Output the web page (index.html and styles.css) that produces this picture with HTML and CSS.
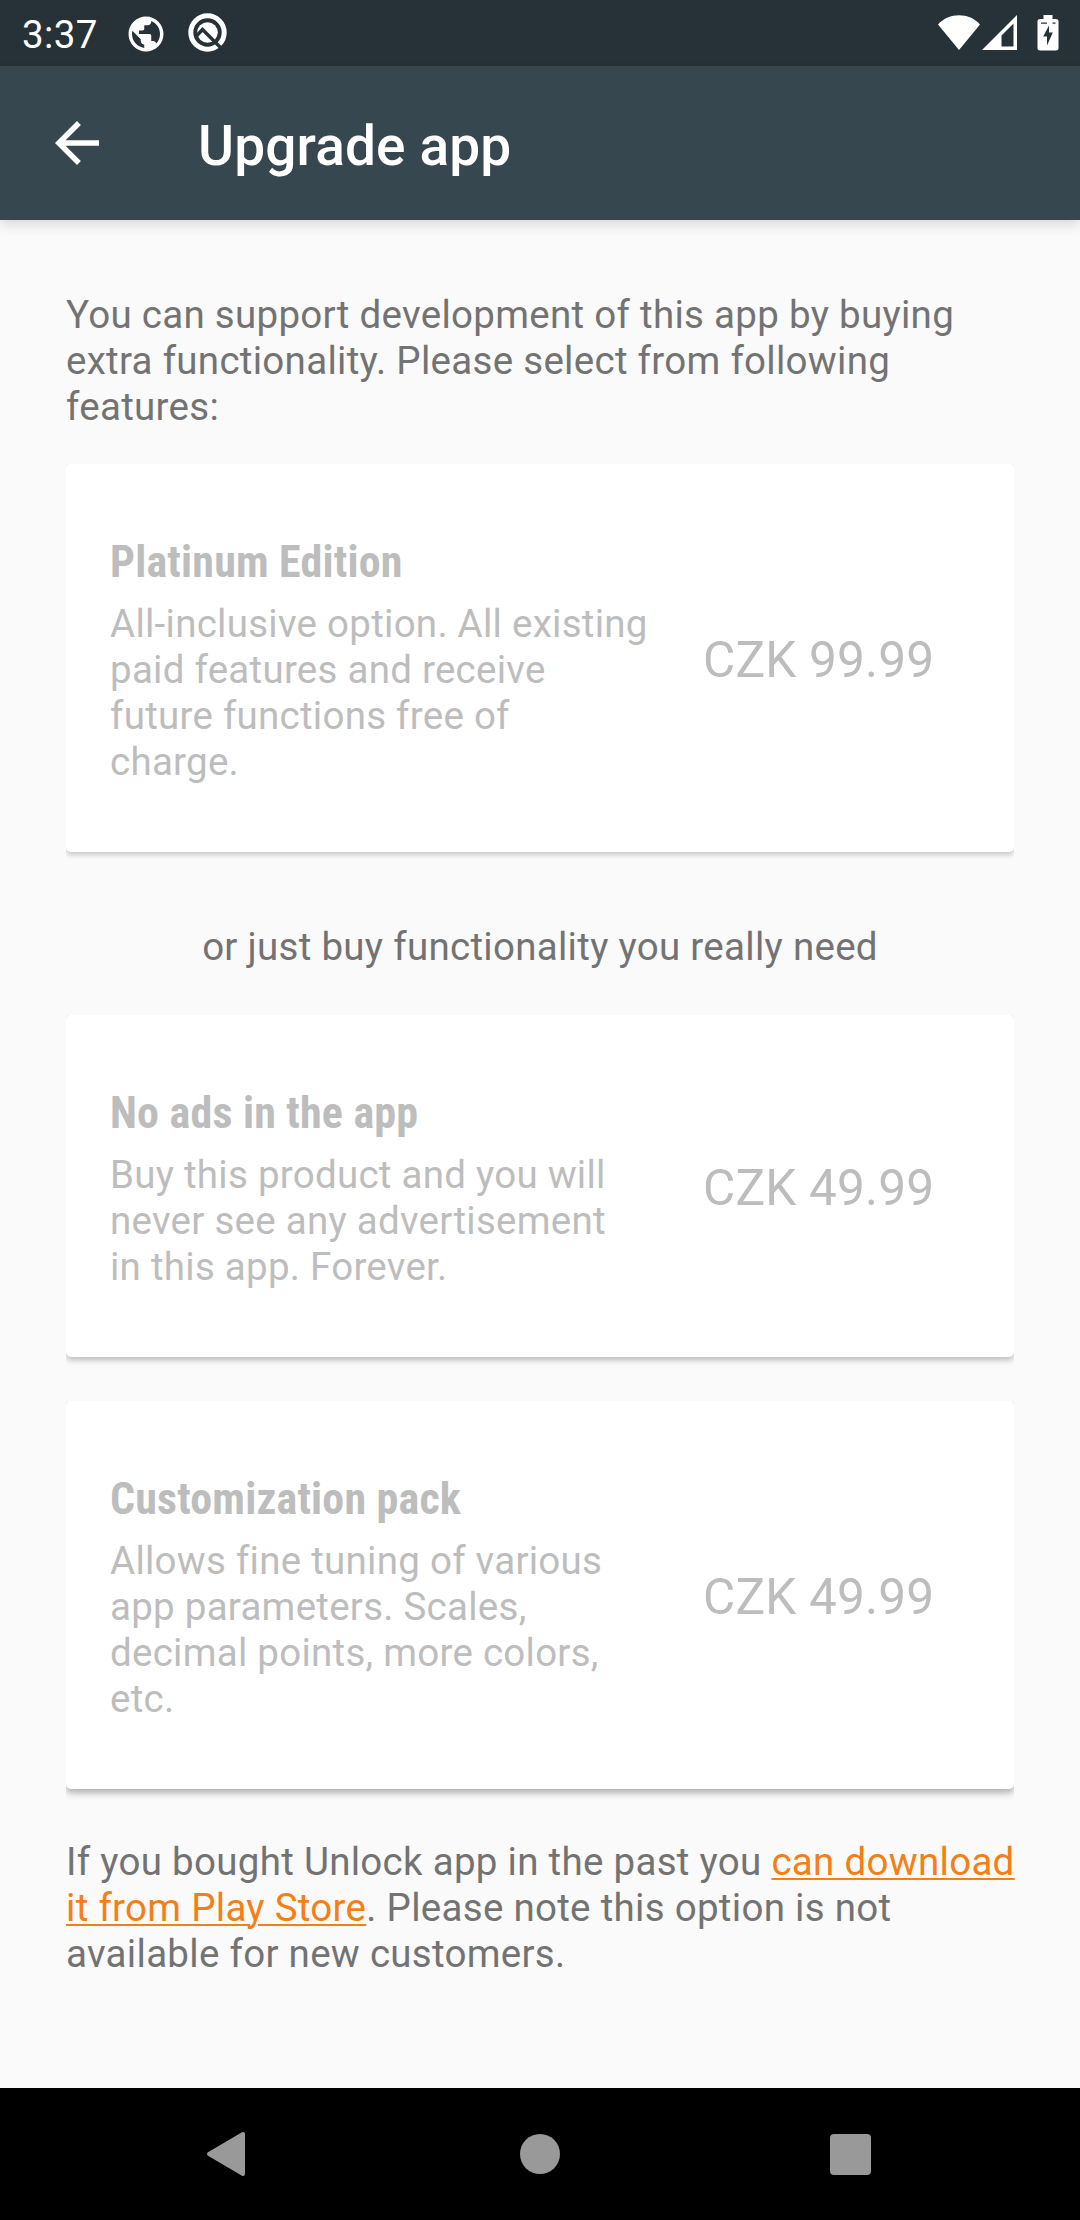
FILE: index.html
```
<!DOCTYPE html>
<html lang="en">
<head>
	<meta charset="UTF-8">
	<title>Upgrade app</title>
	<link rel="stylesheet" href="styles.css">
</head>
<body>
	<div class="status">
		<span class="time">3:37</span>
		<svg class="globe" width="42" height="42" viewBox="0 0 24 24"><path fill="#fff" d="M12 2C6.48 2 2 6.48 2 12s4.48 10 10 10 10-4.480 10-10S17.520 2 12 2zm-1 17.930c-3.950-.49-7-3.850-7-7.930 0-.62.08-1.210.21-1.790L9 15v1c0 1.100.9 2 2 2v1.930zm6.900-2.540c-.26-.81-1-1.390-1.900-1.390h-1v-3c0-.55-.45-1-1-1H8v-2h2c.55 0 1-.45 1-1V7h2c1.100 0 2-.9 2-2v-.41c2.930 1.190 5 4.060 5 7.410 0 2.080-.8 3.970-2.100 5.390z"/></svg>
		<svg class="quick" width="40" height="40" viewBox="0 0 40 40">
			<circle cx="19.500" cy="19.500" r="16.700" fill="none" stroke="#fff" stroke-width="5"/>
			<circle cx="19.500" cy="19.500" r="10.300" fill="#fff"/>
			<path d="M8.500 23l6-6.500L34 36" fill="none" stroke="#263238" stroke-width="3.400"/>
		</svg>
		<div class="signals">
			<svg width="42" height="36" viewBox="0 0 42 36"><path fill="#fff" d="M0 9.500C11-2.800 31-2.800 42 9.500L21 35z"/></svg>
			<svg width="36" height="36" viewBox="0 0 36 36"><path fill="#fff" fill-rule="evenodd" d="M0 35L35 0v35zM19.500 31.500h12V8.500l-12 12z"/></svg>
			<svg class="battery" width="22" height="36" viewBox="0 0 22 36">
				<path fill="#fff" d="M6.500 0h9v4H19q2.500 0 2.500 2.500v27q0 2-2.500 2H3q-2.500 0-2.500-2v-27Q.500 4 3 4h3.500z"/>
				<path fill="#263238" d="M4 7.500h6v1.300H4zM15.500 7.500h3v1.300h-3zM12 10.500v7h3.800L10 30.500v-9H6.200z"/>
			</svg>
		</div>
	</div>
	<div class="bar">
		<svg width="66" height="66" viewBox="0 0 24 24"><path fill="#fff" d="M20 11H7.830l5.590-5.590L12 4l-8 8 8 8 1.410-1.410L7.830 13H20v-2z"/></svg>
		<h1>Upgrade app</h1>
	</div>
	<div class="content">
		<p class="intro">You can support development of this app by buying<br>extra functionality. Please select from following<br>features:</p>
		<div class="card">
			<div class="info">
				<h2>Platinum Edition</h2>
				<p>All-inclusive option. All existing<br>paid features and receive<br>future functions free of<br>charge.</p>
			</div>
			<div class="price">CZK 99.99</div>
		</div>
		<p class="or">or just buy functionality you really need</p>
		<div class="card mid">
			<div class="info">
				<h2>No ads in the app</h2>
				<p>Buy this product and you will<br>never see any advertisement<br>in this app. Forever.</p>
			</div>
			<div class="price">CZK 49.99</div>
		</div>
		<div class="card low">
			<div class="info">
				<h2>Customization pack</h2>
				<p>Allows fine tuning of various<br>app parameters. Scales,<br>decimal points, more colors,<br>etc.</p>
			</div>
			<div class="price">CZK 49.99</div>
		</div>
		<p class="note">If you bought Unlock app in the past you <a href="#">can download<br>it from Play Store</a>. Please note this option is not<br>available for new customers.</p>
	</div>
	<div class="nav">
		<svg width="42" height="48" viewBox="0 0 42 48"><path fill="#999" stroke="#999" stroke-width="4" stroke-linejoin="round" d="M38 4v40L4 24z"/></svg>
		<svg class="home" width="42" height="42" viewBox="0 0 42 42"><circle cx="21" cy="21" r="20" fill="#999"/></svg>
		<svg width="42" height="42" viewBox="0 0 42 42"><rect y="1" width="41" height="41" rx="4" fill="#999"/></svg>
	</div>
</body>
</html>
```
FILE: styles.css
```
*{margin: 0;padding: 0;box-sizing: border-box;}
body{width: 1080px;height: 2220px;display: flex;flex-direction: column;background: #fafafa;color: #737373;font-family: Roboto, sans-serif;font-size: 38.5px;line-height: 46px;letter-spacing: .29px;overflow: hidden;}
svg{display: block;flex: none;}
p{white-space: nowrap;}

.status{height: 66px;padding: 0 21px;display: flex;align-items: center;background: #263238;color: #fff;}
.time{width: 104px;padding: 3px 0 0 1px;letter-spacing: .4px;}
.globe{margin-bottom: -1px;}
.quick{margin-left: 21px;}
.signals{margin-left: auto;display: flex;gap: 2px;}
.battery{margin-left: 17px;}

.bar{height: 154px;padding: 0 44px;display: flex;align-items: center;background: #37474f;box-shadow: 0 4px 12px rgba(0,0,0,.15);}
.bar h1{margin: 6px 0 0 88px;font-size: 55px;font-weight: 500;line-height: 66px;letter-spacing: .15px;color: #fff;}

.content{flex: 1;padding: 72px 66px 0;}
.card{height: 388px;margin-top: 34px;padding: 69px 44px 0;display: flex;background: #fff;border-radius: 5px;color: #bdbdbd;box-shadow: 0 3px 5px rgba(0,0,0,.2);clip-path: inset(0 0 -14px 0);}
.card .info{width: 593px;letter-spacing: .26px;}
.card h2{font-family: "Roboto Condensed", Roboto, sans-serif;font-stretch: 75%;font-size: 44px;line-height: 58px;font-weight: bold;letter-spacing: .18px;margin-bottom: 10px;}
.card .price{font-size: 49.5px;line-height: 60px;letter-spacing: .2px;margin-top: 97px;white-space: nowrap;}
.or{margin-top: 72px;text-align: center;}
.card.mid{height: 342px;margin-top: 45px;box-shadow: 0 3px 6px rgba(0,0,0,.26);}
.card.mid .price{margin-top: 74px;}
.card.low{margin-top: 44px;box-shadow: 0 4px 7px rgba(0,0,0,.3);}
.note{margin-top: 50px;}
.note a{color: #f57f17;text-decoration: underline;text-decoration-thickness: 2px;text-underline-offset: 3px;}

.nav{height: 132px;padding: 0 208px 0 205px;display: flex;align-items: center;justify-content: space-between;background: #000;}
.home{margin-left: 3px;}
```
